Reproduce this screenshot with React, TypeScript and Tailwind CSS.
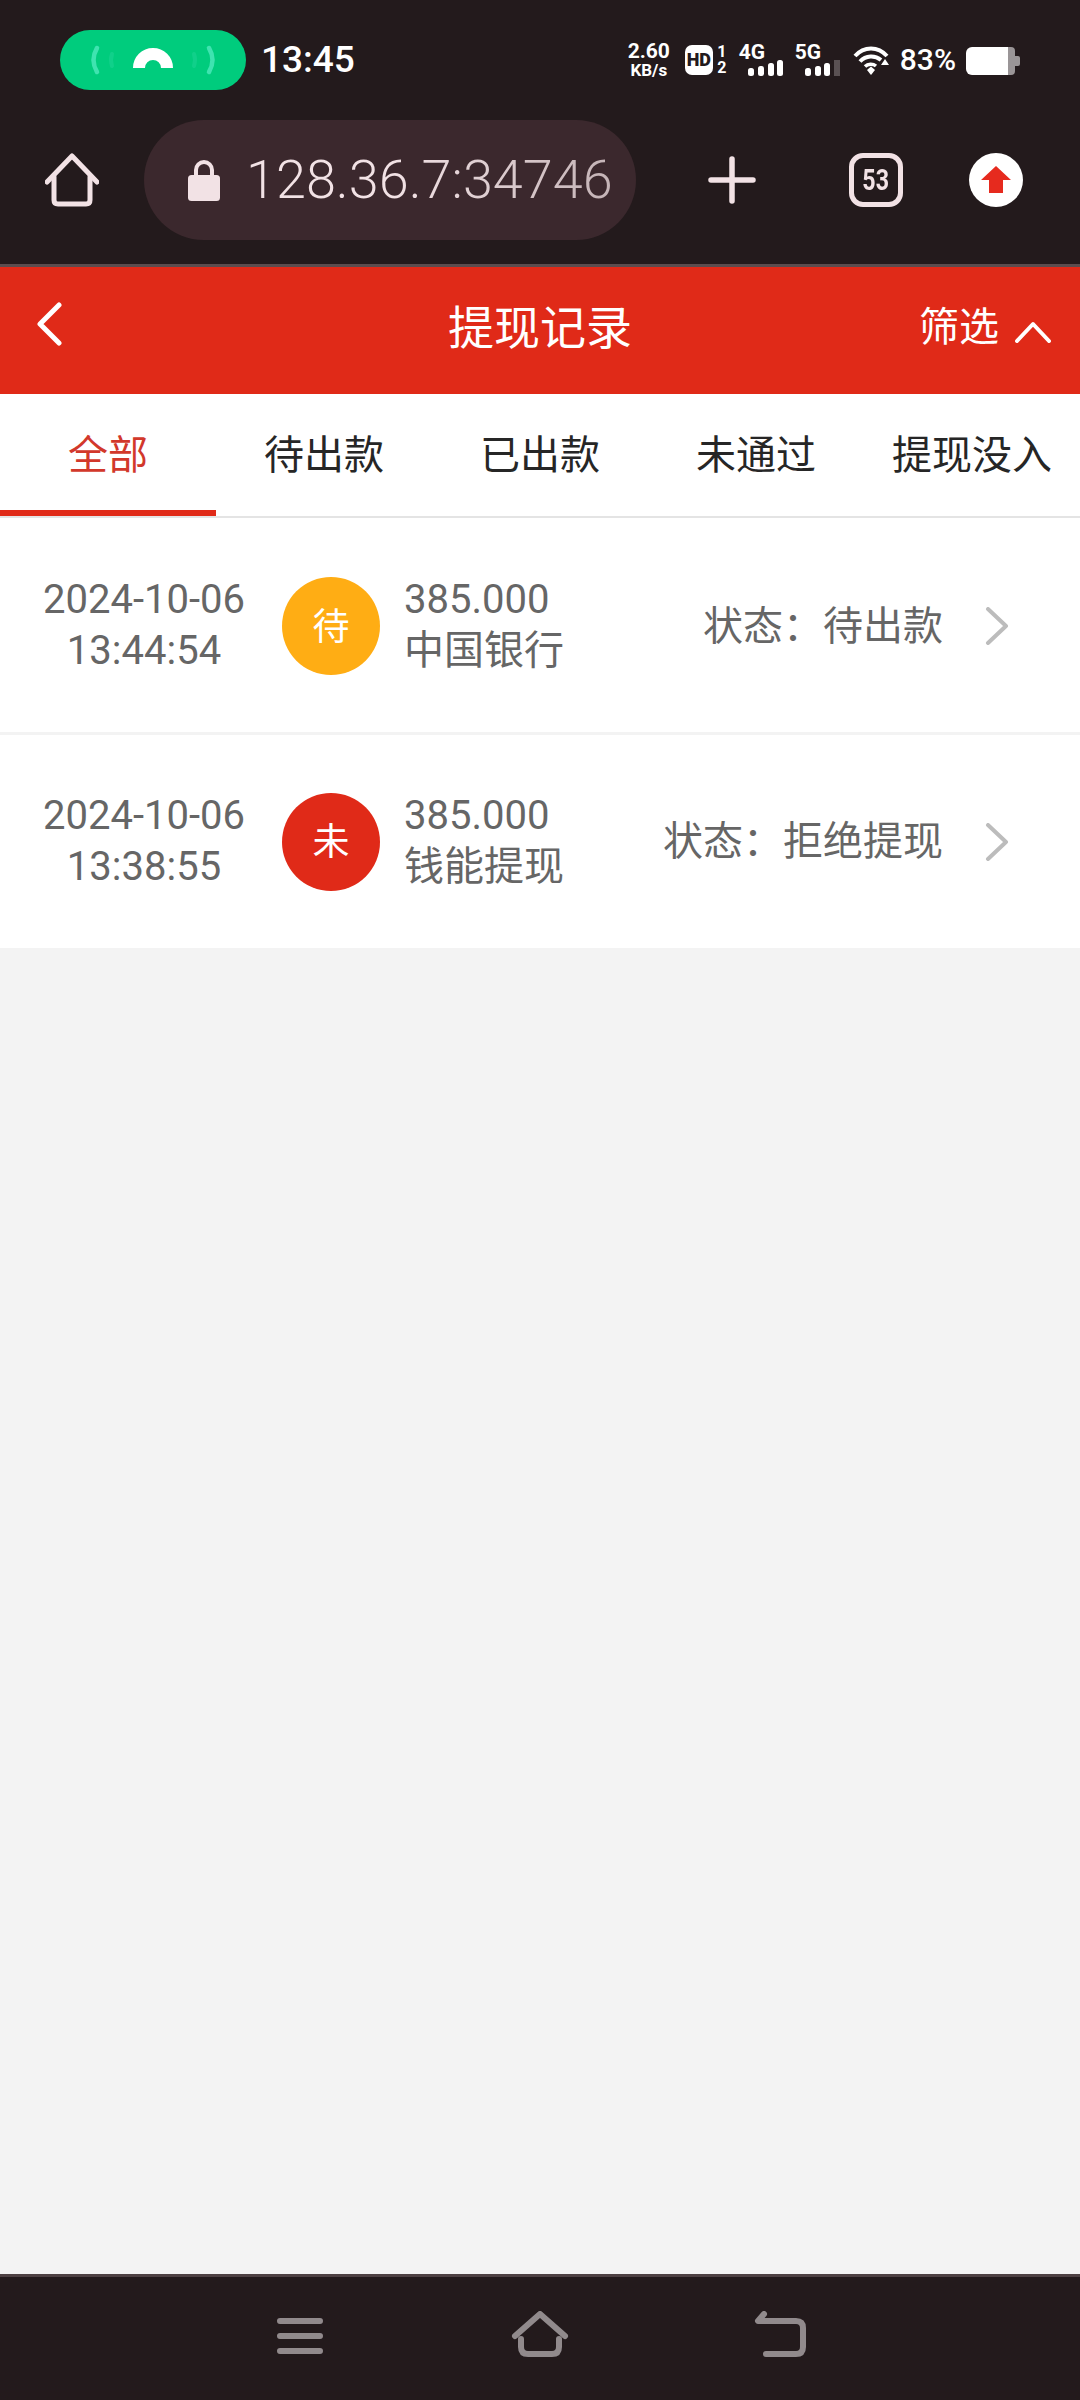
export default function App() {
  const rows = [
    { date: "2024-10-06", time: "13:44:54", badge: "待", color: "bg-[#ffad14]", bank: "中国银行", status: "状态：待出款" },
    { date: "2024-10-06", time: "13:38:55", badge: "未", color: "bg-[#e02a18]", bank: "钱能提现", status: "状态：拒绝提现" },
  ];
  const tabs = ["全部", "待出款", "已出款", "未通过", "提现没入"];
  return (
    <div className="flex h-[2400px] w-[1080px] flex-col overflow-hidden bg-[#f3f3f3] font-['Roboto','Noto_Sans_CJK_SC',sans-serif]">
      {/* status bar */}
      <div className="flex h-[120px] shrink-0 items-center bg-[#231a1c] text-white">
        <div className="ml-[60px] h-[60px] w-[186px] rounded-full bg-[#00cc7d]">
          <svg width="186" height="60" viewBox="0 0 186 60" fill="none">
            <path d="M37 18 Q30 30 37 42" stroke="#3fe3b0" strokeWidth="4.5" strokeLinecap="round" />
            <path d="M149 18 Q156 30 149 42" stroke="#3fe3b0" strokeWidth="4.5" strokeLinecap="round" />
            <path d="M52 24 Q50 30 52 36" stroke="#10d08a" strokeWidth="4" strokeLinecap="round" />
            <path d="M134 24 Q136 30 134 36" stroke="#10d08a" strokeWidth="4" strokeLinecap="round" />
            <path d="M79 38 A14 14 0 0 1 107 38" stroke="#fff" strokeWidth="12" />
          </svg>
        </div>
        <span className="-mt-[2px] ml-[15px] text-[37px] leading-none font-medium">13:45</span>
        <div className="ml-auto mr-[60px] flex items-center">
          <div className="flex w-[42px] flex-col items-center font-bold">
            <span className="text-[21px] leading-[20px]">2.60</span>
            <span className="text-[17px] leading-[18px]">KB/s</span>
          </div>
          <div className="ml-[15px] flex h-[32px] w-[42px] items-center">
            <div className="flex h-[30px] w-[28px] items-center justify-center rounded-[7px] bg-white text-[18px] leading-none font-black text-[#231a1c]">HD</div>
            <div className="ml-[4px] flex w-[10px] flex-col items-center text-[16px] leading-[16px] font-bold">
              <span>1</span>
              <span>2</span>
            </div>
          </div>
          <div className="ml-[12px] flex w-[46px] flex-col">
            <span className="text-[21px] leading-[17px] font-bold">4G</span>
            <svg className="-mt-[2px]" width="46" height="17" viewBox="0 0 46 17">
              <rect x="9" y="9" width="6" height="8" rx="2.5" fill="#fff" />
              <rect x="19" y="7" width="6" height="10" rx="2.5" fill="#fff" />
              <rect x="29" y="4" width="6" height="13" rx="2.5" fill="#fff" />
              <rect x="38" y="1" width="6" height="16" rx="2.5" fill="#fff" />
            </svg>
          </div>
          <div className="ml-[10px] flex w-[46px] flex-col">
            <span className="text-[21px] leading-[17px] font-bold">5G</span>
            <svg className="-mt-[2px]" width="46" height="17" viewBox="0 0 46 17">
              <rect x="10" y="9" width="6" height="8" rx="2.5" fill="#fff" />
              <rect x="20" y="7" width="6" height="10" rx="2.5" fill="#fff" />
              <rect x="29" y="4" width="6" height="13" rx="2.5" fill="#fff" />
              <rect x="39" y="1" width="6" height="16" fill="#5a5153" />
            </svg>
          </div>
          <svg className="ml-[12px]" width="37" height="30" viewBox="0 0 37 30" fill="none">
            <path d="M2 11 C11 1 25 1 34 11" stroke="#fff" strokeWidth="4" />
            <path d="M7 16.5 C13 10 22 10 28 15" stroke="#fff" strokeWidth="4" />
            <path d="M12 21.5 C15 18.5 20 18.5 23 21" stroke="#fff" strokeWidth="3.5" />
            <path d="M14 25 L18 21.5 L22 25 L18 30 Z" fill="#fff" />
            <path d="M28 20 L32 14 L36 20 Z" fill="#fff" />
          </svg>
          <span className="ml-[10px] text-[30px] leading-none font-medium">83%</span>
          <svg className="ml-[10px] mt-[2px]" width="54" height="28" viewBox="0 0 54 28">
            <path d="M6 0 H42 V28 H6 A6 6 0 0 1 0 22 V6 A6 6 0 0 1 6 0 Z" fill="#fff" />
            <path d="M42 0 H45 A4 4 0 0 1 49 4 V24 A4 4 0 0 1 45 28 H42 Z" fill="#9a9597" />
            <path d="M49 9 H52 A2 2 0 0 1 54 11 V17 A2 2 0 0 1 52 19 H49 Z" fill="#9a9597" />
          </svg>
        </div>
      </div>

      {/* browser bar */}
      <div className="flex h-[147px] shrink-0 items-start border-b-[3px] border-[#5b4c4e] bg-[#231a1c]">
        <svg className="ml-[45px] mt-[33px]" width="54" height="54" viewBox="0 0 54 54" fill="none" stroke="#f2e2e5" strokeWidth="5" strokeLinecap="round" strokeLinejoin="round">
          <path d="M2 29 L27 3 L52 29" />
          <path d="M9 24 V47 Q9 51 13 51 H41 Q45 51 45 47 V24" />
        </svg>
        <div className="ml-[45px] flex h-[120px] w-[492px] items-center rounded-full bg-[#3b282d]">
          <svg className="ml-[44px]" width="32" height="42" viewBox="0 0 32 42" fill="none">
            <path d="M8 18 V11 A8 8 0 0 1 24 11 V18" stroke="#f2e2e5" strokeWidth="4" />
            <rect x="0" y="16" width="32" height="26" rx="3.5" fill="#f2e2e5" />
          </svg>
          <span className="ml-[26px] bg-gradient-to-r from-[#f2e2e5] from-40% to-[#c4b3b6] bg-clip-text text-[54px] leading-none font-light whitespace-nowrap text-transparent">128.36.7:34746</span>
        </div>
        <svg className="ml-[72px] mt-[36px]" width="48" height="48" viewBox="0 0 48 48" fill="none" stroke="#f2e2e5" strokeWidth="5.5" strokeLinecap="round">
          <path d="M24 3 V45 M3 24 H45" />
        </svg>
        <div className="ml-[93px] mt-[33px] flex h-[54px] w-[54px] items-center justify-center rounded-[14px] border-[5px] border-[#f2e2e5] text-[#f2e2e5]">
          <span className="scale-x-[0.8] text-[29px] leading-none font-bold">53</span>
        </div>
        <div className="ml-[66px] mt-[33px] flex h-[54px] w-[54px] items-center justify-center rounded-full bg-white">
          <svg width="30" height="28" viewBox="0 0 30 28">
            <path d="M15 0 L30 14 H22 V27 H8 V14 H0 Z" fill="#e62a1e" />
          </svg>
        </div>
      </div>

      {/* header */}
      <div className="relative flex h-[127px] shrink-0 items-center justify-center bg-[#e02a18] text-white">
        <svg className="absolute left-[36px] top-[35px]" width="26" height="44" viewBox="0 0 26 44" fill="none" stroke="#fff" strokeWidth="5" strokeLinecap="round" strokeLinejoin="round">
          <path d="M23 3 L4 22 L23 41" />
        </svg>
        <span className="-mt-[6px] text-[46px] leading-none">提现记录</span>
        <div className="absolute right-[28px] top-[41px] flex items-center">
          <span className="text-[40px] leading-none">筛选</span>
          <svg className="ml-[15px] mt-[5px]" width="38" height="24" viewBox="0 0 38 24" fill="none" stroke="#fff" strokeWidth="4" strokeLinecap="round" strokeLinejoin="round">
            <path d="M3 22 L19 5 L35 22" />
          </svg>
        </div>
      </div>

      {/* tabs */}
      <div className="flex h-[124px] shrink-0 border-b-2 border-[#e4e4e4] bg-white">
        {tabs.map((t, i) => (
          <div
            key={t}
            className={i === 0
              ? "flex w-[216px] items-center justify-center border-b-[6px] border-[#e02a18] pt-[7px] text-[40px] leading-none text-[#d2382b]"
              : "flex w-[216px] items-center justify-center pt-[1px] text-[40px] leading-none text-[#262626]"}
          >
            {t}
          </div>
        ))}
      </div>

      {/* records */}
      <div className="flex flex-col bg-white">
        {rows.map((r, i) => (
          <div
            key={r.time}
            className={i === 0
              ? "flex h-[217px] items-center border-b-[3px] border-[#f3f3f3] pt-[2px] text-[40px] leading-[51px] text-[#666]"
              : "flex h-[213px] items-center text-[40px] leading-[51px] text-[#666]"}
          >
            <div className="-mt-[2px] ml-[38px] flex w-[212px] flex-col items-center">
              <span>{r.date}</span>
              <span>{r.time}</span>
            </div>
            <div className={`ml-[32px] flex h-[98px] w-[98px] shrink-0 items-center justify-center rounded-full text-[37px] text-white ${r.color}`}>
              <span className="mt-[2px]">{r.badge}</span>
            </div>
            <div className="-mt-[2px] ml-[24px] flex flex-col">
              <span>385.000</span>
              <span>{r.bank}</span>
            </div>
            <span className="ml-auto">{r.status}</span>
            <svg className="ml-[42px] mr-[71px]" width="24" height="38" viewBox="0 0 24 38" fill="none" stroke="#bcbcbc" strokeWidth="4" strokeLinecap="round" strokeLinejoin="round">
              <path d="M3 2 L21 19 L3 36" />
            </svg>
          </div>
        ))}
      </div>

      <div className="flex-1" />

      {/* navigation bar */}
      <div className="flex h-[126px] shrink-0 items-start justify-center gap-[180px] border-t-[3px] border-[#4d4042] bg-[#231a1c] pt-[34px]">
        <svg width="60" height="46" viewBox="0 0 60 46" fill="none" stroke="#918a8c" strokeWidth="6" strokeLinecap="round">
          <path d="M10 10 H50 M10 25 H50 M10 40 H50" />
        </svg>
        <svg width="60" height="46" viewBox="0 0 60 46" fill="none" stroke="#918a8c" strokeWidth="6" strokeLinecap="round" strokeLinejoin="round">
          <path d="M5 25 L30 3 L55 25" />
          <path d="M11 28 V36 Q11 43 18 43 H42 Q49 43 49 36 V28" />
        </svg>
        <svg width="60" height="46" viewBox="0 0 60 46" fill="none" stroke="#918a8c" strokeWidth="6" strokeLinecap="round" strokeLinejoin="round">
          <path d="M14 3 L8 10 H46 Q53 10 53 17 V36 Q53 43 46 43 H16" />
        </svg>
      </div>
    </div>
  );
}
